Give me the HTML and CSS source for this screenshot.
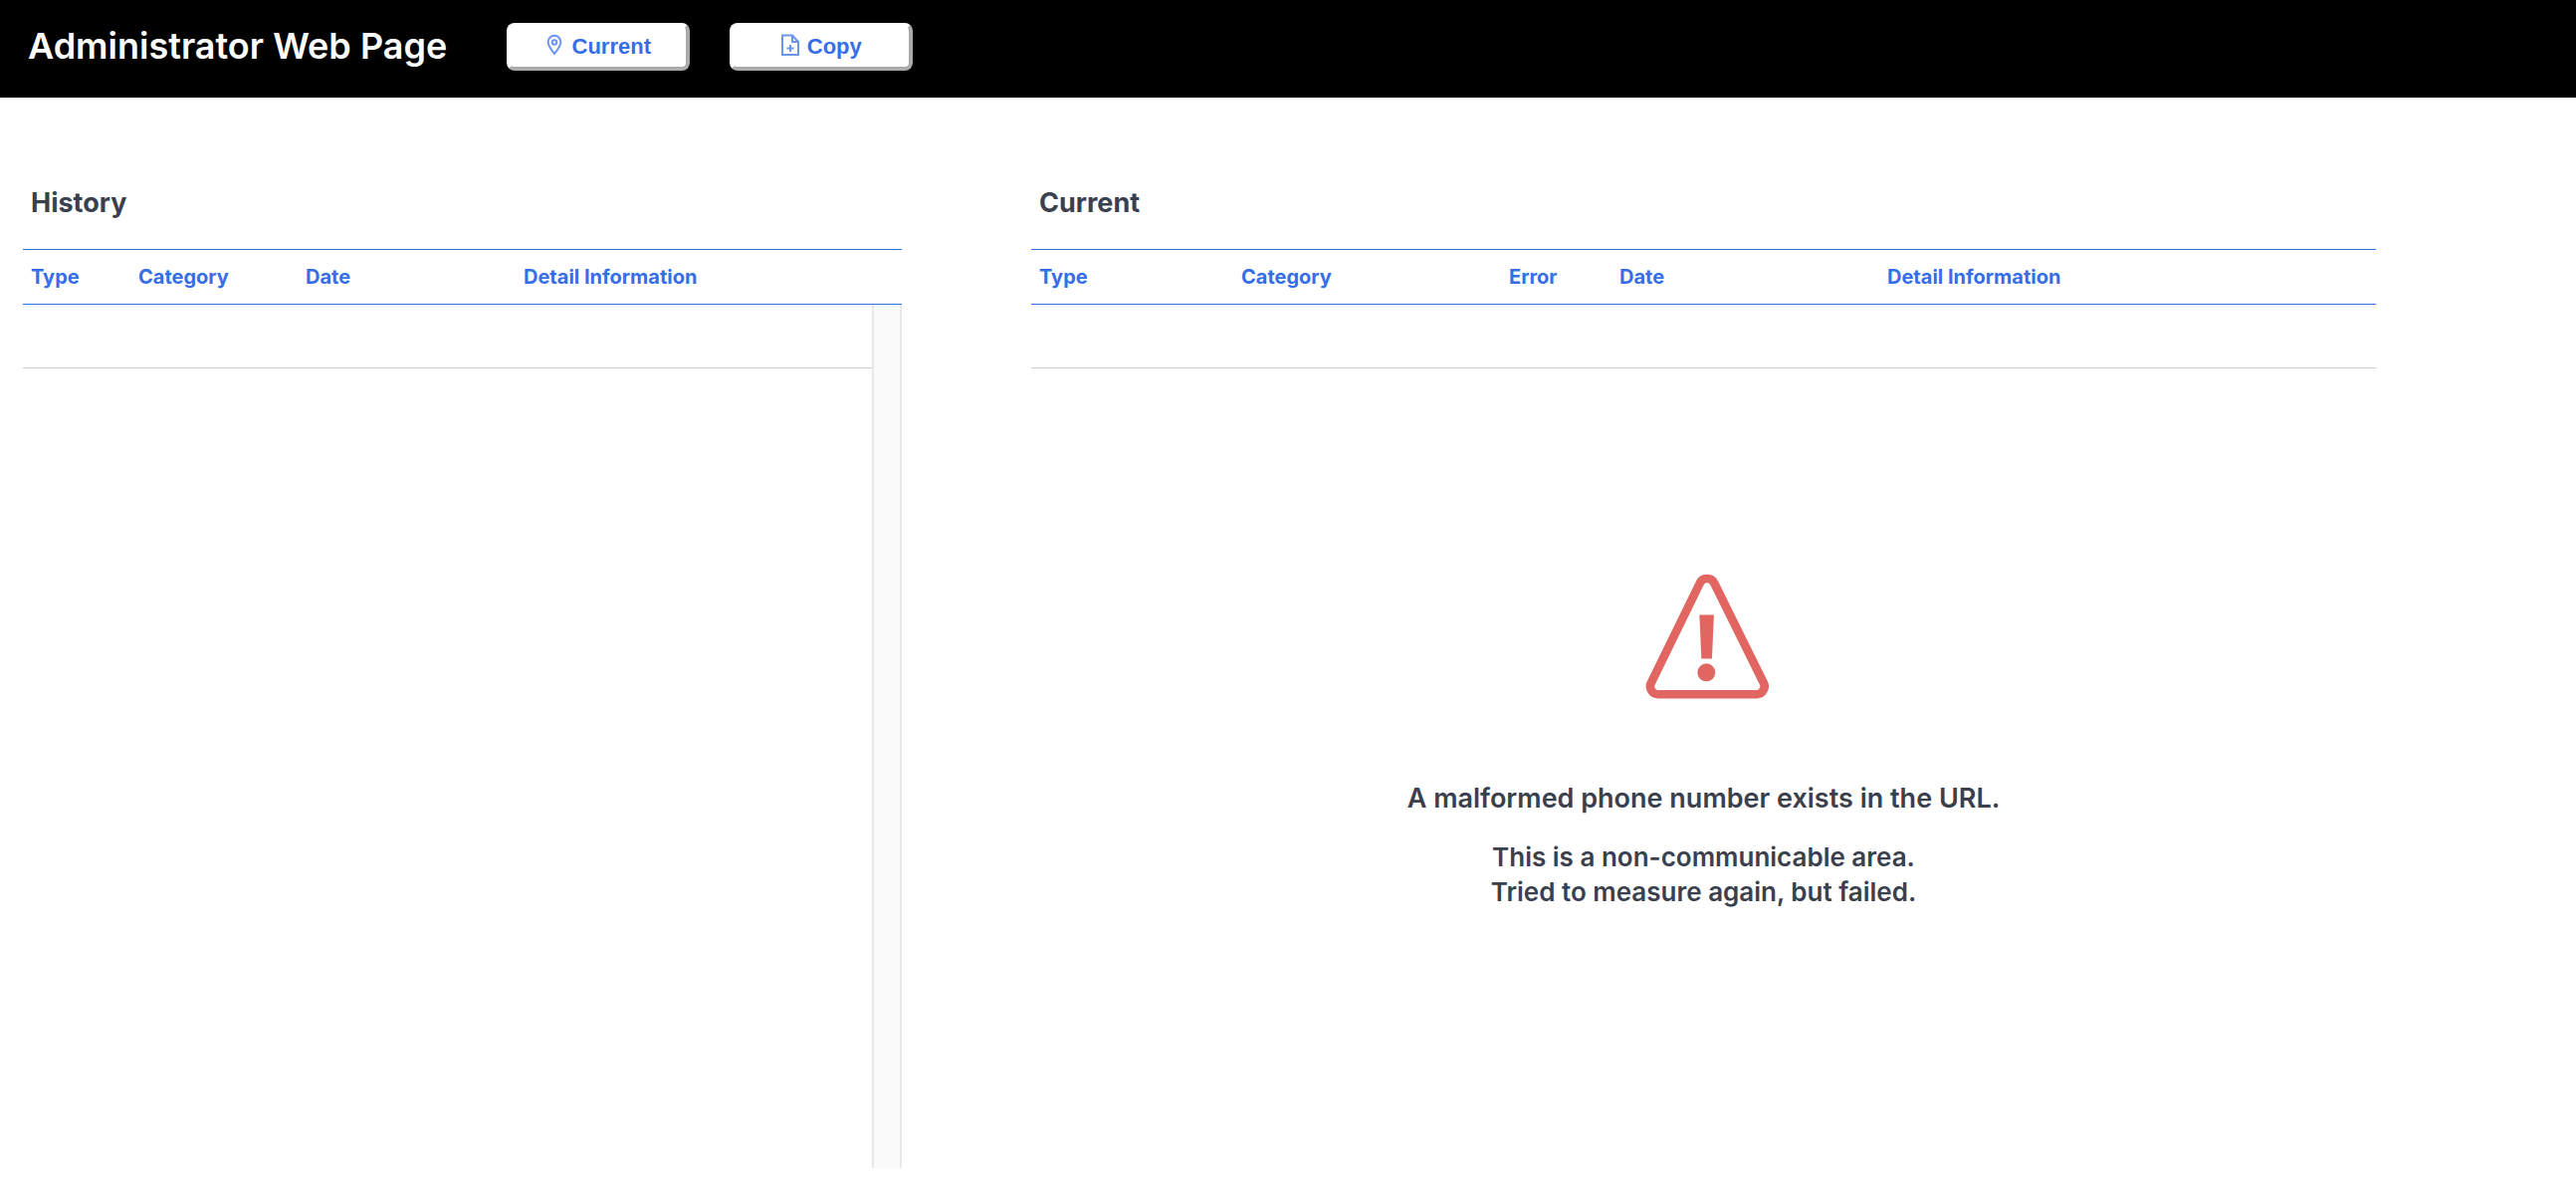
FILE: index.html
```
<!DOCTYPE html>
<html lang="en">
<head>
<meta charset="utf-8">
<title>Administrator Web Page</title>
<link rel="stylesheet" href="styles.css">
</head>
<body>
<header class="topbar">
  <h1 class="topbar-title">Administrator Web Page</h1>
  <div class="topbar-actions">
    <button class="action" type="button">
      <svg class="action-icon" viewBox="0 0 18 22" aria-hidden="true"><path d="M8 20C5 16 1.600 12 1.600 8.200a6.400 6.400 0 0 1 12.800 0C14.400 12 11 16 8 20Z"/><circle cx="8" cy="8.500" r="2.300"/></svg>
      <span>Current</span>
    </button>
    <button class="action" type="button">
      <svg class="action-icon" viewBox="0 0 18 22" aria-hidden="true"><path d="M1 1.500H11L17 8V21H1ZM11 1.500V8H17M9 11V18M5.500 14.500H12.500"/></svg>
      <span>Copy</span>
    </button>
  </div>
</header>
<main class="content">
  <section class="panel">
    <h2 class="panel-title">History</h2>
    <table class="grid">
      <colgroup><col class="h-type"><col class="h-category"><col class="h-date"><col></colgroup>
      <thead><tr><th scope="col">Type</th><th scope="col">Category</th><th scope="col">Date</th><th scope="col">Detail Information</th></tr></thead>
    </table>
    <div class="scroll-area">
      <div class="scroll-body">
        <div class="empty-row"></div>
      </div>
      <div class="scroll-track"></div>
    </div>
  </section>
  <section class="panel">
    <h2 class="panel-title">Current</h2>
    <table class="grid">
      <colgroup><col class="c-type"><col class="c-category"><col class="c-error"><col class="c-date"><col></colgroup>
      <thead><tr><th scope="col">Type</th><th scope="col">Category</th><th scope="col">Error</th><th scope="col">Date</th><th scope="col">Detail Information</th></tr></thead>
    </table>
    <div class="empty-row"></div>
    <div class="notice" role="alert">
      <svg class="notice-icon" viewBox="49 46 392 379" aria-hidden="true">
        <path class="notice-outline" d="M232 75A24 24 0 0 1 276 75L424 374A24 24 0 0 1 405 411H105A24 24 0 0 1 86 374Z"/>
        <path class="notice-mark" d="M231 171H275L269 303H237Z"/>
        <circle class="notice-mark" cx="252" cy="345" r="27"/>
      </svg>
      <p class="notice-title">A malformed phone number exists in the URL.</p>
      <p class="notice-text">This is a non-communicable area.<br>Tried to measure again, but failed.</p>
    </div>
  </section>
</main>
</body>
</html>
```
FILE: styles.css
```
* { box-sizing: border-box; }

body {
  margin: 0;
  min-height: 100vh;
  display: flex;
  flex-direction: column;
  background: #fff;
  color: #3a404d;
  font-family: Inter, "Liberation Sans", sans-serif;
}

.topbar {
  display: flex;
  align-items: flex-start;
  gap: 60px;
  padding: 23px 28px 27px;
  background: #000;
}

.topbar-title {
  margin: 0;
  color: #fff;
  font-size: 36px;
  font-weight: 600;
  line-height: 46px;
}

.topbar-actions { display: flex; gap: 40px; }

.action {
  display: flex;
  align-items: center;
  justify-content: center;
  gap: 8px;
  width: 184px;
  height: 48px;
  padding: 0;
  border: 4px solid;
  border-color: #fff #aaa #aaa #fff;
  border-radius: 8px;
  background: #fff;
  color: #366ee8;
  font: bold 22px/28px "Liberation Sans", Arial, sans-serif;
}

.action-icon {
  width: 18px;
  height: 22px;
  margin-bottom: 4px;
  fill: none;
  stroke: #6b95ef;
  stroke-width: 2;
}

.content {
  flex: 1;
  display: grid;
  grid-template-columns: 883fr 1351fr;
  gap: 130px;
  padding: 84px 201px 11px 23px;
}

.panel { display: flex; flex-direction: column; }

.panel-title {
  margin: 0 0 24px;
  padding-left: 8px;
  font-size: 27px;
  font-weight: 700;
  line-height: 44px;
}

.grid {
  width: 100%;
  table-layout: fixed;
  border-collapse: separate;
  border-spacing: 0;
  border-top: 1px solid #366ee8;
  border-bottom: 1px solid #366ee8;
}

.grid th {
  height: 54px;
  padding: 0 8px;
  color: #366ee8;
  font-size: 20px;
  font-weight: 700;
  line-height: 28px;
  text-align: left;
}

.h-type { width: 108px; }
.h-category { width: 168px; }
.h-date { width: 219px; }

.c-type { width: 203px; }
.c-category { width: 269px; }
.c-error { width: 111px; }
.c-date { width: 269px; }

.empty-row {
  height: 64px;
  border-bottom: 1px solid #ccc;
}

.scroll-area { flex: 1; display: flex; }
.scroll-body { flex: 1; }

.scroll-track {
  width: 30px;
  border: solid #e8e8e8;
  border-width: 0 2px;
  background: #fafafa;
}

.notice {
  display: flex;
  flex-direction: column;
  align-items: center;
  padding-top: 206px;
  text-align: center;
  font-weight: 600;
  line-height: 35px;
}

.notice-icon { width: 130px; height: 126px; margin-bottom: 82px; }
.notice-outline { fill: none; stroke: #e16662; stroke-width: 26; }
.notice-mark { fill: #e16662; }

.notice-title {
  margin: 0 0 24px;
  font-size: 27px;
}

.notice-text {
  margin: 0;
  font-size: 26px;
}
```
